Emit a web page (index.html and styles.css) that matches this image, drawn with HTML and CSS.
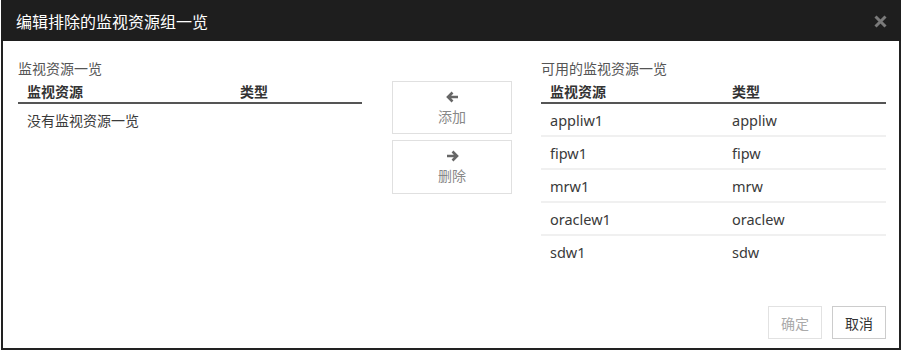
FILE: index.html
```html
<!DOCTYPE html>
<html lang="zh">
<head>
<meta charset="utf-8">
<title>编辑排除的监视资源组一览</title>
<link rel="stylesheet" href="styles.css">
</head>
<body>
<div class="dialog">
  <div class="titlebar">
    <span class="title">编辑排除的监视资源组一览</span>
    <svg class="close" width="13" height="13" viewBox="0 0 13 13"><path d="M1.5 1.5 L11.5 11.5 M11.5 1.5 L1.5 11.5" stroke="#7a7a7a" stroke-width="3" fill="none"/></svg>
  </div>
  <div class="body">
    <div class="columns">
      <div class="panel left">
        <div class="label">监视资源一览</div>
        <div class="thead"><span class="c1">监视资源</span><span class="c2">类型</span></div>
        <div class="row empty"><span class="c1">没有监视资源一览</span></div>
      </div>
      <div class="moves">
        <div class="mbtn">
          <svg width="13" height="12" viewBox="0 0 13 12"><path d="M12 6 H2.5 M6.5 1.5 L2 6 L6.5 10.5" stroke="#666" stroke-width="2.6" fill="none"/></svg>
          <span>添加</span>
        </div>
        <div class="mbtn">
          <svg width="13" height="12" viewBox="0 0 13 12"><path d="M1 6 H10.5 M6.5 1.5 L11 6 L6.5 10.5" stroke="#666" stroke-width="2.6" fill="none"/></svg>
          <span>删除</span>
        </div>
      </div>
      <div class="panel right">
        <div class="label">可用的监视资源一览</div>
        <div class="thead"><span class="c1">监视资源</span><span class="c2">类型</span></div>
        <div class="row"><span class="c1">appliw1</span><span class="c2">appliw</span></div>
        <div class="row"><span class="c1">fipw1</span><span class="c2">fipw</span></div>
        <div class="row"><span class="c1">mrw1</span><span class="c2">mrw</span></div>
        <div class="row"><span class="c1">oraclew1</span><span class="c2">oraclew</span></div>
        <div class="row last"><span class="c1">sdw1</span><span class="c2">sdw</span></div>
      </div>
    </div>
    <div class="footer">
      <div class="fbtn disabled">确定</div>
      <div class="fbtn">取消</div>
    </div>
  </div>
</div>
</body>
</html>
```
FILE: styles.css
```css
html, body {
  margin: 0;
  padding: 0;
  background: #fff;
}
body {
  font-family: "Noto Sans", "Noto Sans CJK SC", sans-serif;
  font-size: 14px;
  color: #333;
}
.dialog {
  box-sizing: border-box;
  width: 900px;
  height: 350px;
  margin-left: 1px;
  border: 2px solid #222;
  border-top: none;
  display: flex;
  flex-direction: column;
}
.titlebar {
  height: 41px;
  background: #1e1e1e;
  display: flex;
  align-items: center;
  justify-content: space-between;
  padding: 0 14px 0 15px;
  margin: 0 -2px;
}
.title {
  color: #fff;
  font-size: 16px;
  line-height: 20px;
  font-family: "Noto Sans CJK SC", sans-serif;
  margin-top: 1px;
}
.close {
  margin-top: 2px;
}
.body {
  flex: 1;
  display: flex;
  flex-direction: column;
  padding: 17px 12px 9px 15px;
}
.columns {
  display: flex;
  align-items: flex-start;
}
.panel.left {
  width: 344px;
}
.panel.right {
  width: 345px;
}
.moves {
  width: 120px;
  margin: 23px 29px 0 30px;
  display: flex;
  flex-direction: column;
  gap: 6px;
}
.label {
  height: 20px;
  line-height: 20px;
  color: #555;
  font-family: "Noto Sans CJK SC", sans-serif;
  font-size: 14px;
  margin-bottom: 3px;
}
.thead {
  display: flex;
  height: 21px;
  line-height: 20px;
  border-bottom: 2px solid #555;
  font-weight: bold;
  color: #333;
  font-family: "Noto Sans CJK SC", sans-serif;
}
.c1 {
  padding-left: 9px;
  width: 182px;
  flex: none;
}
.left .c1 { width: 213px; }
.c2 {
  flex: 1;
}
.row {
  display: flex;
  align-items: center;
  height: 31px;
  border-bottom: 2px solid #f0f0f0;
  color: #3a3a3a;
  font-size: 14.5px;
}
.row.last, .row.empty {
  border-bottom: none;
}
.row.empty {
  font-family: "Noto Sans CJK SC", sans-serif;
  font-size: 14px;
}
.mbtn {
  box-sizing: border-box;
  height: 53px;
  border: 1px solid #e0e0e0;
  display: flex;
  flex-direction: column;
  align-items: center;
  justify-content: center;
  gap: 4px;
  color: #888;
  font-family: "Noto Sans CJK SC", sans-serif;
}
.mbtn + .mbtn {
  height: 54px;
}
.mbtn span {
  line-height: 18px;
}
.footer {
  margin-top: auto;
  display: flex;
  justify-content: flex-end;
  gap: 10px;
  padding-right: 1px;
}
.fbtn {
  box-sizing: border-box;
  width: 54px;
  height: 33px;
  border: 1px solid #ccc;
  display: flex;
  align-items: center;
  justify-content: center;
  color: #333;
  font-family: "Noto Sans CJK SC", sans-serif;
}
.fbtn.disabled {
  color: #aaa;
  border-color: #e2e2e2;
}
```
